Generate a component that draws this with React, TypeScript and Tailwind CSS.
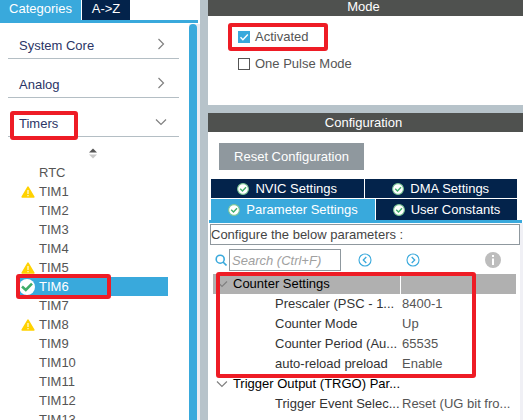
import type { ReactNode } from "react";

type Peripheral = { name: string; state?: "warning" | "ok" };

const peripherals: Peripheral[] = [
  { name: "RTC" },
  { name: "TIM1", state: "warning" },
  { name: "TIM2" },
  { name: "TIM3" },
  { name: "TIM4" },
  { name: "TIM5", state: "warning" },
  { name: "TIM6", state: "ok" },
  { name: "TIM7" },
  { name: "TIM8", state: "warning" },
  { name: "TIM9" },
  { name: "TIM10" },
  { name: "TIM11" },
  { name: "TIM12" },
  { name: "TIM13" },
];

const counterRows = [
  { label: "Prescaler (PSC - 1...", value: "8400-1" },
  { label: "Counter Mode", value: "Up" },
  { label: "Counter Period (Au...", value: "65535" },
  { label: "auto-reload preload", value: "Enable" },
];

function Chevron({ down = false }: { down?: boolean }) {
  return (
    <svg width="12" height="12" viewBox="0 0 12 12" fill="none" stroke="#808080" strokeWidth="1.2">
      <path d={down ? "M1 3.5 L6 8.5 L11 3.5" : "M3.5 1 L8.5 6 L3.5 11"} />
    </svg>
  );
}

function Warning() {
  return (
    <svg width="14" height="12" viewBox="0 0 14 12">
      <path d="M7 1.2 L12.8 11 H1.2 Z" fill="#ffd200" stroke="#ffd200" strokeWidth="1.6" strokeLinejoin="round" />
      <path d="M7 4 V8 M7 9 V10.2" stroke="#fff" strokeWidth="1.1" />
    </svg>
  );
}

function SelectedCheck() {
  return (
    <svg width="16" height="16" viewBox="0 0 16 16">
      <circle cx="8" cy="8" r="8" fill="#fff" />
      <path d="M3 7.5 L6.8 11 L13 4.6" fill="none" stroke="#3fae6a" strokeWidth="2.6" />
    </svg>
  );
}

function TabCheck() {
  return (
    <svg width="12" height="12" viewBox="0 0 12 12">
      <circle cx="6" cy="6" r="5.4" fill="#fff" stroke="#7cc795" strokeWidth="1.1" />
      <path d="M3.2 5.8 L5.5 8 L9 4.3" fill="none" stroke="#3fae6a" strokeWidth="1.4" />
    </svg>
  );
}

function Marker({ className }: { className: string }) {
  return <div className={`pointer-events-none absolute rounded-[3px] border-4 border-[#ee1c25] ${className}`} />;
}

function Category({ name, open = false, children }: { name: string; open?: boolean; children?: ReactNode }) {
  return (
    <div className="relative mr-[10px] ml-2 h-[39px]">
      <button className="flex h-full w-full items-end justify-between border-b border-[#b4bec4] pr-3 pb-1 pl-[11px] text-[#2b3566]">
        <span className="leading-4">{name}</span>
        <span className="pb-1">
          <Chevron down={open} />
        </span>
      </button>
      {children}
    </div>
  );
}

function Sidebar() {
  return (
    <aside className="flex w-[200px] shrink-0 flex-col bg-white">
      <div className="mr-[2px] flex h-[23px] shrink-0 gap-px border-b-[3px] border-[#39a9dc] text-white">
        <button className="w-[81px] bg-[#39a9dc] pb-[2px]">Categories</button>
        <button className="w-12 bg-[#03234b] pb-[2px]">A-&gt;Z</button>
      </div>
      <div className="flex min-h-0 flex-1">
        <div className="min-w-0 flex-1 -mt-[3px]">
          <Category name="System Core" />
          <Category name="Analog" />
          <Category name="Timers" open>
            <Marker className="top-[13px] left-[2px] h-[29px] w-[68px]" />
          </Category>
          <div className="flex h-[26px] items-center justify-center pt-[7px] pr-1">
            <svg width="8" height="11" viewBox="0 0 8 11">
              <path d="M4 0.5 L8 4.5 H0 Z" fill="#555" />
              <path d="M0 6.5 H8 L4 10.5 Z" fill="#c8c8c8" />
            </svg>
          </div>
          <ul className="pr-[21px] pl-[18px]">
            {peripherals.map(({ name, state }) => (
              <li
                key={name}
                className={`relative flex h-[19px] items-center gap-1 ${state === "ok" ? "bg-[#39a9dc] text-white" : "text-[#555]"}`}
              >
                <span className="flex w-[17px] justify-end">
                  {state === "warning" && <Warning />}
                  {state === "ok" && <SelectedCheck />}
                </span>
                {name}
                {state === "ok" && <Marker className="-top-[3px] -left-[2px] h-[25px] w-[95px]" />}
              </li>
            ))}
          </ul>
        </div>
        <div className="mt-px w-[11px] bg-[#ececf2] pr-[3px]">
          <div className="h-full rounded-t-full bg-[#39a9dc]" />
        </div>
      </div>
    </aside>
  );
}

function CheckOption({ label, checked = false }: { label: string; checked?: boolean }) {
  return (
    <label className="flex items-center gap-[5px] leading-4">
      <span className="grid size-3">
        <input
          type="checkbox"
          defaultChecked={checked}
          className="peer col-start-1 row-start-1 size-3 appearance-none border border-[#555] bg-white checked:border-[#39a9dc] checked:bg-[#39a9dc]"
        />
        <svg
          viewBox="0 0 12 12"
          fill="none"
          stroke="#fff"
          strokeWidth="1.4"
          className="pointer-events-none invisible col-start-1 row-start-1 size-3 peer-checked:visible"
        >
          <path d="M2.5 6.2 L4.9 8.7 L9.8 3.4" />
        </svg>
      </span>
      {label}
    </label>
  );
}

function ConfigTab({ label, className }: { label: string; className: string }) {
  return (
    <button className={`flex items-center justify-center gap-[6px] text-white ${className}`}>
      <TabCheck />
      {label}
    </button>
  );
}

function StepIcon({ back = false }: { back?: boolean }) {
  return (
    <svg width="14" height="14" viewBox="0 0 14 14" fill="none" stroke="#39a9dc">
      <circle cx="7" cy="7" r="6" strokeWidth="1.1" />
      <path d={back ? "M8.3 4 L5.3 7 L8.3 10" : "M5.7 4 L8.7 7 L5.7 10"} strokeWidth="1.3" />
    </svg>
  );
}

function ParameterRow({ label, value }: { label: string; value: string }) {
  return (
    <tr className="h-5">
      <td className="pl-[62px] text-[#333]">{label}</td>
      <td className="pl-[2px] text-[#555]">{value}</td>
    </tr>
  );
}

function GroupLabel({ children }: { children: string }) {
  return (
    <span className="flex items-center gap-[5px] pl-[3px] text-black">
      <Chevron down />
      {children}
    </span>
  );
}

export default function App() {
  return (
    <div className="flex h-screen overflow-hidden bg-[#b7c3ca] font-['Liberation_Sans',Arial,sans-serif] text-[13px] leading-4">
      <Sidebar />
      <main className="ml-2 flex min-w-0 flex-1 flex-col gap-2">
        <section className="h-[105px] shrink-0 bg-white text-[#555]">
          <h2 className="h-4 bg-[#4f514f] pr-1 text-center leading-[14px] text-white">Mode</h2>
          <div className="relative flex flex-col gap-[11px] pt-[13px] pl-[30px]">
            <CheckOption label="Activated" checked />
            <CheckOption label="One Pulse Mode" />
            <Marker className="top-[7px] left-5 h-7 w-[100px]" />
          </div>
        </section>
        <section className="flex min-h-0 flex-1 flex-col bg-white">
          <h2 className="h-[19px] shrink-0 bg-[#4f514f] pr-1 text-center leading-[19px] text-white">Configuration</h2>
          <button className="mt-[11px] ml-[11px] h-[27px] w-[145px] shrink-0 bg-[#8f989e] text-white">
            Reset Configuration
          </button>
          <div className="mt-[9px] mr-[6px] ml-[3px] flex flex-col gap-px">
            <div className="flex h-[19px] gap-px">
              <ConfigTab label="NVIC Settings" className="flex-1 bg-[#03234b]" />
              <ConfigTab label="DMA Settings" className="flex-1 bg-[#03234b]" />
            </div>
            <div className="flex h-[21px] gap-px">
              <ConfigTab label="Parameter Settings" className="w-[164px] bg-[#39a9dc]" />
              <ConfigTab label="User Constants" className="flex-1 bg-[#03234b]" />
            </div>
          </div>
          <div className="mr-px ml-px h-[3px] shrink-0 bg-[#39a9dc]" />
          <div className="flex min-h-0 flex-1">
            <div className="min-w-0 flex-1 pt-px pl-[2px]">
              <p className="h-[21px] border border-[#8f989e] leading-[19px] text-[#444]">
                Configure the below parameters :
              </p>
              <div className="mt-1 flex h-[22px] items-center pr-[19px] pl-[5px]">
                <svg width="12" height="12" viewBox="0 0 12 12" fill="none" stroke="#39a9dc" strokeWidth="1.6">
                  <circle cx="5.2" cy="5.2" r="4" />
                  <path d="M8 8 L11.5 11.5" />
                </svg>
                <input
                  type="text"
                  aria-label="Search"
                  placeholder="Search (Ctrl+F)"
                  className="ml-[2px] h-[22px] w-28 border border-[#8f989e] px-[2px] italic placeholder:text-[#a0a0a0]"
                />
                <button aria-label="Previous match" className="ml-[17px]">
                  <StepIcon back />
                </button>
                <button aria-label="Next match" className="ml-[34px]">
                  <StepIcon />
                </button>
                <button aria-label="Information" className="ml-auto">
                  <svg width="16" height="16" viewBox="0 0 16 16">
                    <circle cx="8" cy="8" r="8" fill="#bdbdbd" />
                    <path d="M8 3 V5 M8 6.5 V13" stroke="#fff" strokeWidth="2" />
                  </svg>
                </button>
              </div>
              <div className="relative mt-[3px] mr-1 ml-[3px]">
                <table className="w-full table-fixed border-collapse whitespace-nowrap">
                  <colgroup>
                    <col className="w-[187px]" />
                    <col />
                  </colgroup>
                  <tbody>
                    <tr className="h-5 bg-[#b0b0b0]">
                      <td className="border-r border-white">
                        <GroupLabel>Counter Settings</GroupLabel>
                      </td>
                      <td />
                    </tr>
                    {counterRows.map((row) => (
                      <ParameterRow key={row.label} {...row} />
                    ))}
                    <tr className="h-5">
                      <td>
                        <GroupLabel>Trigger Output (TRGO) Par...</GroupLabel>
                      </td>
                      <td />
                    </tr>
                    <ParameterRow label="Trigger Event Selec..." value="Reset (UG bit fro..." />
                  </tbody>
                </table>
                <Marker className="-top-[2px] left-[3px] h-[106px] w-[260px]" />
              </div>
            </div>
            <div className="w-[3px] bg-[#f0f0f5]" />
          </div>
        </section>
      </main>
    </div>
  );
}
